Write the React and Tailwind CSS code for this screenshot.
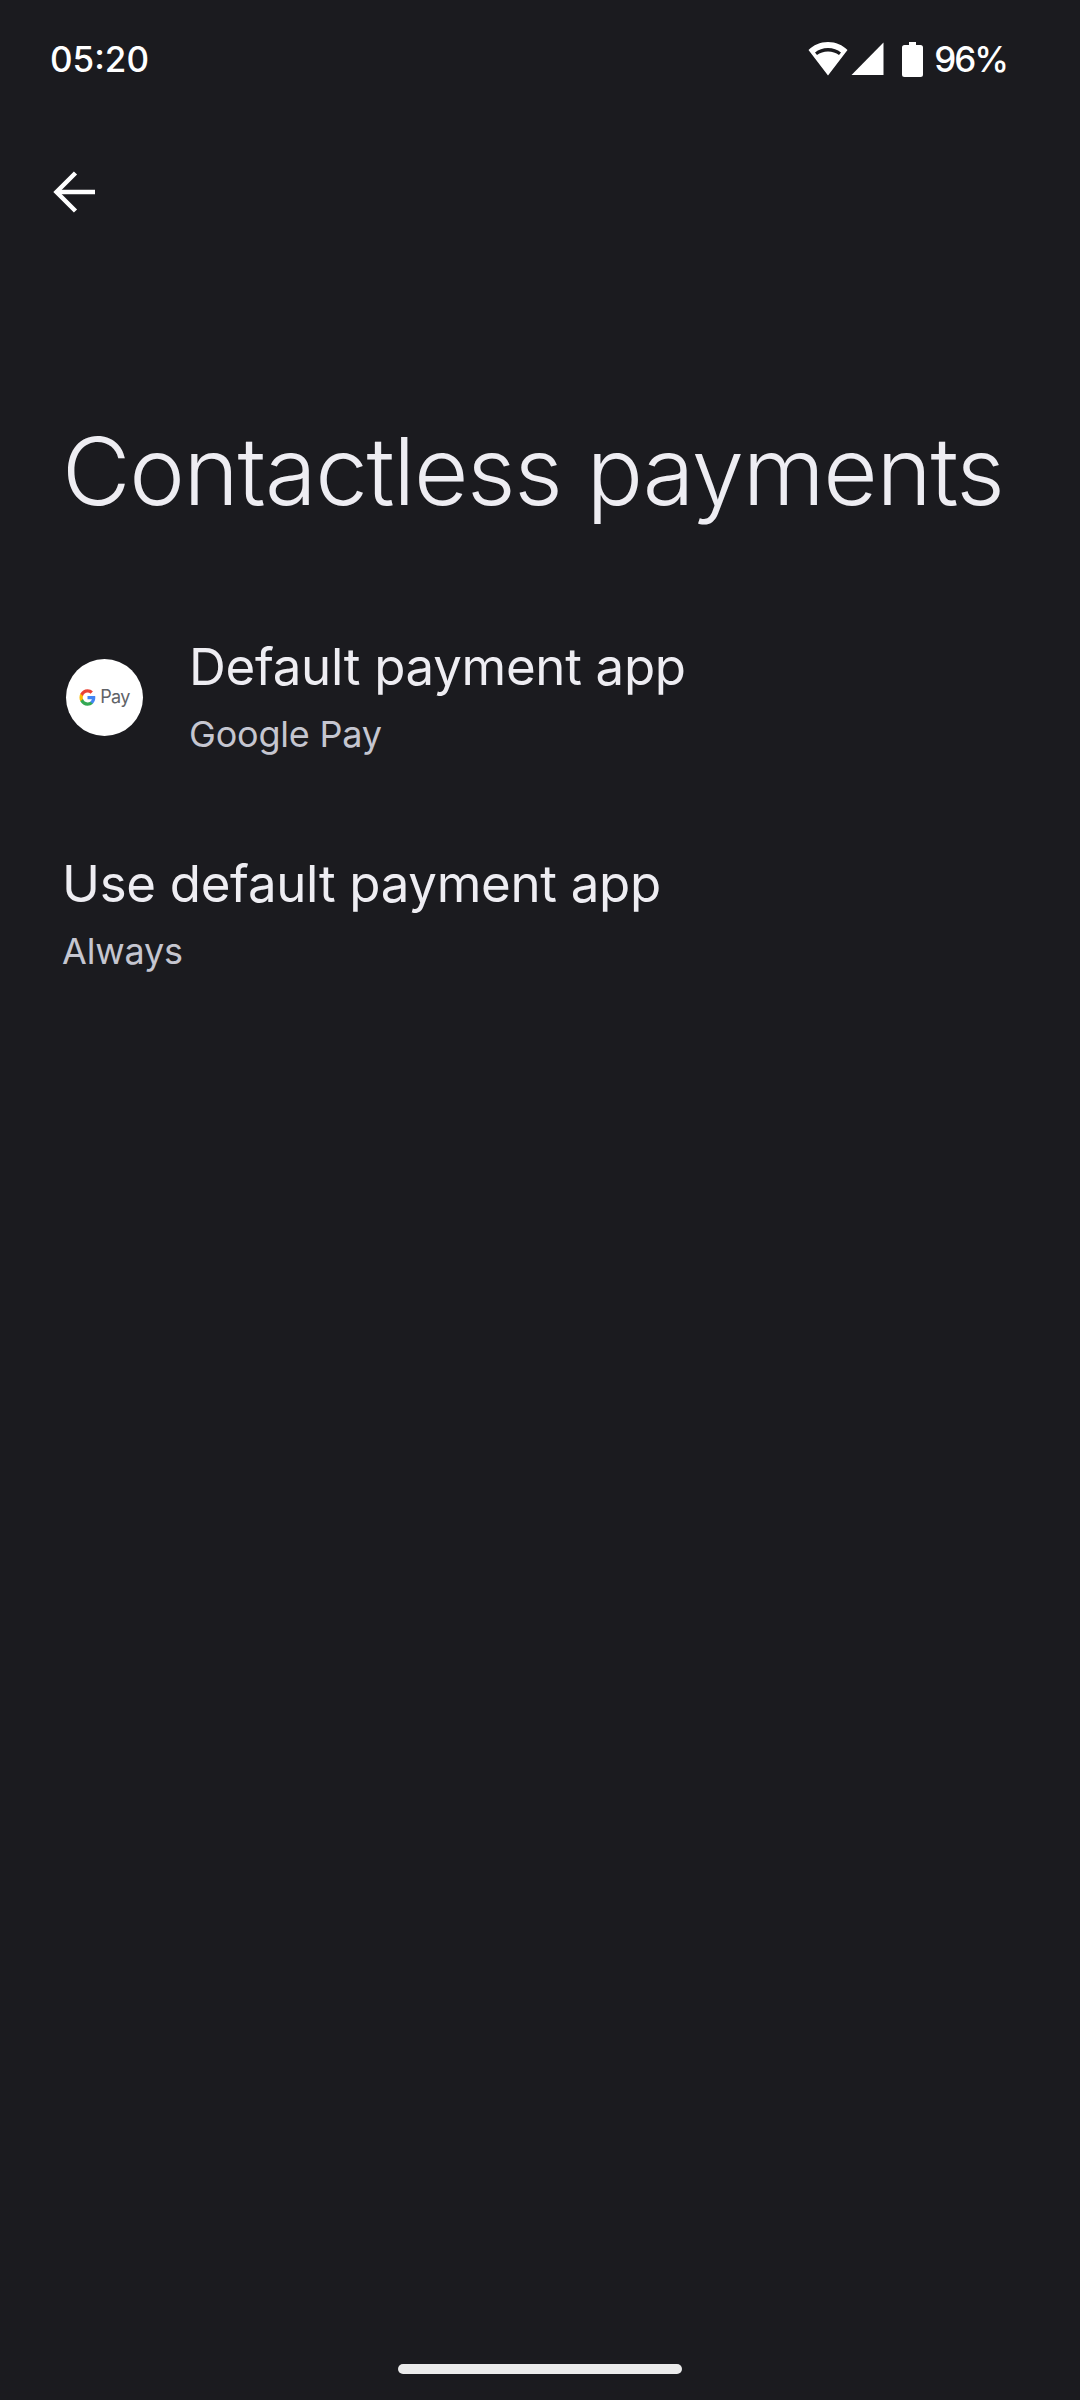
import React from "react";

const font = "font-['Inter',sans-serif]";

const GLogo = () => (
  <svg width="17" height="17" viewBox="0 0 48 48">
    <path fill="#4285F4" d="M46 24.5c0-1.6-.1-3.100-.4-4.600H24v8.900h12.400c-.5 2.800-2.100 5.200-4.500 6.800v5.700h7.300C43.500 36.400 46 31 46 24.500z" />
    <path fill="#34A853" d="M24 47c6.100 0 11.300-2 15.200-5.600l-7.300-5.700c-2.100 1.400-4.800 2.200-7.900 2.200-5.900 0-10.900-4-12.700-9.400H3.700v5.900C7.500 41.800 15.200 47 24 47z" />
    <path fill="#FBBC05" d="M11.300 28.500c-.5-1.400-.7-2.900-.7-4.500s.3-3.100.7-4.500v-5.900H3.700C2.200 16.700 1.300 20.200 1.300 24s.9 7.300 2.400 10.400l7.600-5.900z" />
    <path fill="#EA4335" d="M24 10.100c3.300 0 6.300 1.100 8.700 3.400l6.500-6.500C35.300 3.300 30.100 1 24 1 15.200 1 7.500 6.200 3.700 13.600l7.600 5.900c1.800-5.400 6.800-9.400 12.700-9.400z" />
  </svg>
);

const Row = ({ title, sub, icon }) => (
  <div className="flex items-center">
    {icon}
    <div className="flex flex-col">
      <div className="text-[51px] leading-[68px] tracking-[-0.3px] text-[#eeedf2]">{title}</div>
      <div className="text-[36px] leading-[66px] tracking-[-0.2px] text-[#c5c6d0]">{sub}</div>
    </div>
  </div>
);

export default function App() {
  return (
    <div className={`${font} h-[2400px] w-[1080px] bg-[#1b1b1f] flex flex-col overflow-hidden`}>
      <div className="flex items-center justify-between h-[118px] pl-[50px] pr-[73px] text-white text-[35px]">
        <span className="font-medium">05:20</span>
        <div className="flex items-center">
          <svg width="40" height="34" viewBox="0 0 40 34">
            <path fill="#fff" fillRule="evenodd" d="M20 0C12 0 5.500 3 .5 8L20 33.500 39.500 8C34.500 3 28 0 20 0zM20 6c5 0 9.500 1.500 13 4.500l-2 2.500c-3-2.300-6.800-3.500-11-3.500S12 10.700 9 13l-2-2.500C10.500 7.500 15 6 20 6z" />
          </svg>
          <svg className="ml-[3px]" width="33" height="34" viewBox="0 0 33 34">
            <path fill="#fff" d="M32.500 .5V33H.5z" />
          </svg>
          <svg className="ml-[18px]" width="21" height="35" viewBox="0 0 21 35">
            <path fill="#fff" d="M7 0h7v3h4.500Q21 3 21 5.500V32.500Q21 35 18.500 35H2.500Q0 35 0 32.500V5.500Q0 3 2.500 3H7z" />
          </svg>
          <span className="ml-[11px] font-medium tracking-[-2px]">96%</span>
        </div>
      </div>

      <div className="h-[144px] pl-[52px] pt-[52px]">
        <svg width="44" height="44" viewBox="0 0 44 44" fill="none" stroke="#fff" strokeWidth="4.500">
          <path d="M43 22H5" />
          <path d="M23.500 3 4.500 22l19 19" />
        </svg>
      </div>

      <div className="pl-[62px] pt-[146px] h-[371px] text-[94px] leading-[126px] tracking-[-1.3px] font-[350] text-[#eeedf2] whitespace-nowrap">
        Contactless payments
      </div>

      <Row
        title="Default payment app"
        sub="Google Pay"
        icon={
          <div className="ml-[66px] mr-[46px] -mt-[6px] w-[77px] h-[77px] rounded-full bg-white flex items-center justify-center gap-[4px]">
            <GLogo />
            <span className="text-[18px] leading-none tracking-[-0.6px] text-[#5f6368]">Pay</span>
          </div>
        }
      />
      <div className="h-[83px]" />
      <div className="pl-[62px]">
        <Row title="Use default payment app" sub="Always" />
      </div>

      <div className="mt-auto mb-[26px] mx-auto w-[284px] h-[10px] rounded-full bg-[#ebebeb]" />
    </div>
  );
}
